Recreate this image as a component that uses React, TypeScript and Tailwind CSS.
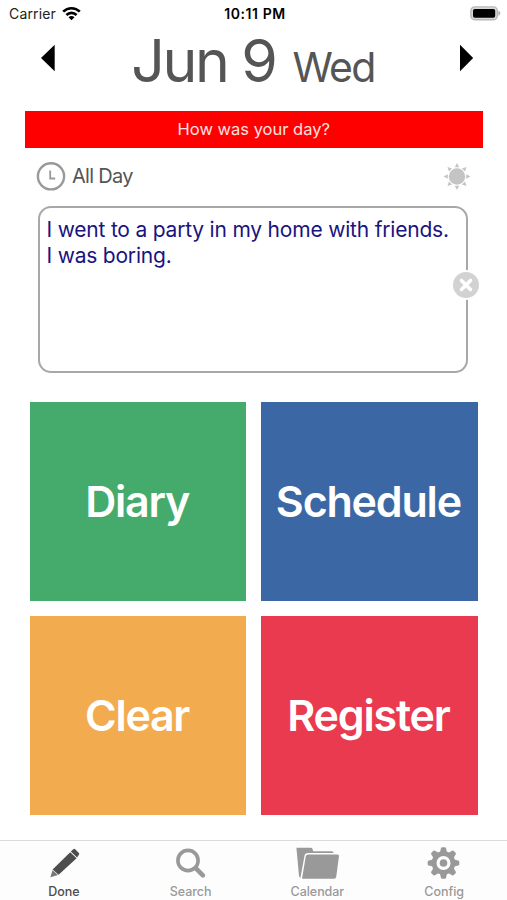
import React from 'react';

function WifiIcon() {
  return (
    <svg className="h-[15px] w-[19px]" viewBox="0 0 19 15" fill="none" stroke="#000" strokeWidth="2.6">
      <path d="M1.2 5.7C5.9 1 13.1 1 17.8 5.7" />
      <path d="M4.4 9C7.3 6.1 11.7 6.1 14.6 9" />
      <path d="M9.5 14.3 6.5 11.2C8.2 9.7 10.8 9.7 12.5 11.2Z" fill="#000" stroke="none" />
    </svg>
  );
}

function BatteryIcon() {
  return (
    <svg className="h-[15px] w-[31px]" viewBox="0 0 31 15">
      <rect x="0.9" y="0.9" width="26.4" height="12.8" rx="3.8" fill="#d8d8d8" stroke="#b8b8b8" strokeWidth="1.4" />
      <rect x="3" y="2.9" width="22.2" height="8.8" rx="1.8" fill="#000" />
      <path d="M28.3 4.8C31 5.6 31 9 28.3 9.8Z" fill="#b2b2b2" />
    </svg>
  );
}

function ClockIcon() {
  return (
    <svg className="h-[30px] w-[30px]" viewBox="0 0 30 30" fill="none" stroke="#999">
      <circle cx="15" cy="15.3" r="13.1" strokeWidth="2.4" />
      <path d="M14.2 9.5V17.5H19.2" strokeWidth="1.8" />
    </svg>
  );
}

const RAYS = [0, 45, 90, 135, 180, 225, 270, 315];

function SunIcon() {
  return (
    <svg className="h-[28px] w-[28px]" viewBox="-14 -14.5 28 28" fill="#c4c4c4">
      <circle r="8.2" />
      {RAYS.map((angle) => (
        <path key={angle} d="M-2.2-9.2H2.2L0-13.4Z" transform={`rotate(${angle})`} />
      ))}
    </svg>
  );
}

function PencilIcon() {
  return (
    <svg className="h-[34px] w-[46px]" viewBox="0 0 46 34">
      <path d="M9.4 31.2 11.5 24.2 17 29Z" fill="#777" />
      <path d="M11.6 23.4 29.2 6.2 35.6 12.2 17.6 28.8Z" fill="#4d4d4d" />
      <path d="M29.8 5.6 32.3 3.2Q33.3 2.4 34.2 3.3L37.9 7Q38.7 7.9 37.9 8.8L36 11.5Z" fill="#4d4d4d" />
    </svg>
  );
}

function SearchIcon() {
  return (
    <svg className="h-[34px] w-[46px]" viewBox="0 0 46 34" fill="none" stroke="#999">
      <circle cx="20" cy="14.5" r="10.1" strokeWidth="3.6" />
      <path d="M27.7 22.1 34.9 29.4" strokeWidth="4.6" strokeLinecap="round" />
    </svg>
  );
}

function FolderIcon() {
  return (
    <svg className="h-[34px] w-[46px]" viewBox="0 0 46 34" fill="#999">
      <path d="M2.4 1.8H16.8Q18.2 1.8 18.6 3.2L19.2 5.3H37.8Q39.6 5.3 39.6 7H14Q11.1 7 10.5 9.8L6.4 32Q5.2 31.4 5 29.8Z" />
      <path d="M14.3 8.4H43.5Q45.2 8.4 45 10.1L42.2 31Q41.9 32.8 40.1 32.8H8L11.7 10.8Q12.1 8.4 14.3 8.4Z" />
    </svg>
  );
}

function GearIcon() {
  return (
    <svg className="h-[34px] w-[46px]" viewBox="-22.5 -17 46 34" fill="#999">
      {RAYS.map((angle) => (
        <path key={angle} d="M-3.8-9.5 -2.6-14.6Q-2.3-15.8 -1.2-15.8H1.2Q2.3-15.8 2.6-14.6L3.8-9.5Z" transform={`rotate(${angle})`} />
      ))}
      <circle r="9.4" fill="none" stroke="#999" strokeWidth="4.8" />
      <circle r="3.8" />
    </svg>
  );
}

const TILES = [
  { label: 'Diary', style: 'bg-[#45ab6c] tracking-[-1.3px]' },
  { label: 'Schedule', style: 'bg-[#3b68a5] tracking-[-1.2px]' },
  { label: 'Clear', style: 'bg-[#f3ab50] tracking-[-1.3px]' },
  { label: 'Register', style: 'bg-[#e93a4f] tracking-[-1.2px]' },
];

const TABS = [
  { label: 'Done', icon: <PencilIcon />, style: 'text-[#4d4d4d]' },
  { label: 'Search', icon: <SearchIcon />, style: 'text-[#999]' },
  { label: 'Calendar', icon: <FolderIcon />, style: 'text-[#999]' },
  { label: 'Config', icon: <GearIcon />, style: 'text-[#999]' },
];

export default function App() {
  return (
    <div className="flex h-[900px] w-[507px] flex-col overflow-hidden whitespace-nowrap bg-white font-['Inter',sans-serif]">
      <div className="grid h-[27px] shrink-0 grid-cols-3 items-center pl-[9px] pr-[6px] text-[14px] text-[#222]">
        <div className="flex items-center gap-[6px]">
          <span className="tracking-[0.15px]">Carrier</span>
          <WifiIcon />
        </div>
        <span className="text-center font-semibold tracking-[0.6px] text-black">10:11 PM</span>
        <div className="flex justify-end">
          <BatteryIcon />
        </div>
      </div>

      <header className="flex h-[84px] shrink-0 items-start justify-between pl-[41px] pr-[33px]">
        <button className="mt-[17px]" aria-label="Previous day">
          <svg className="h-[28px] w-[14px]" viewBox="0 0 14 28"><path d="M0 14 13.7 0.8V27.2Z" /></svg>
        </button>
        <h1 className="mr-[9px] flex items-baseline gap-[17px] leading-[68px] text-[#555]">
          <span className="text-[59px] tracking-[-2.5px]">Jun 9</span>
          <span className="text-[41px] tracking-[-1.7px]">Wed</span>
        </h1>
        <button className="mt-[17px]" aria-label="Next day">
          <svg className="h-[28px] w-[14px]" viewBox="0 0 14 28"><path d="M13.2 14 0 0.8V27.2Z" /></svg>
        </button>
      </header>

      <div className="ml-[25px] flex h-[36.5px] w-[457.5px] shrink-0 items-center justify-center bg-[#ff0000] text-[16.5px] text-[#ffe0e0]">
        How was your day?
      </div>

      <div className="flex h-[58px] shrink-0 items-center pb-[2px] pl-[35.5px] pr-[36px]">
        <ClockIcon />
        <span className="ml-[6.5px] flex-1 text-[20px] tracking-[-0.7px] text-[#555]">All Day</span>
        <SunIcon />
      </div>

      <div className="relative ml-[37.5px] h-[167px] w-[430.5px] shrink-0 rounded-[13px] border-[2.5px] border-[#a8a8a8] pl-[7px] pt-[9px] text-[21px] leading-[26.5px] tracking-[-0.2px] text-[#1a1480]">
        <p>I went to a party in my home with friends.</p>
        <p>I was boring.</p>
        <button className="absolute right-[-15px] top-[62px]" aria-label="Clear text">
          <svg className="h-[30px] w-[30px]" viewBox="0 0 30 30">
            <circle cx="15" cy="15" r="15" fill="#fff" />
            <circle cx="15" cy="15" r="13" fill="#d2d2d2" />
            <path d="M10.5 10.5 19.5 19.5M19.5 10.5 10.5 19.5" stroke="#fff" strokeWidth="3.6" strokeLinecap="round" />
          </svg>
        </button>
      </div>

      <main className="ml-[30px] mt-[29px] grid w-[447.5px] shrink-0 grid-cols-2 gap-[15px]">
        {TILES.map((tile) => (
          <button key={tile.label} className={`flex h-[199px] items-center justify-center pr-[2px] text-[43px] font-semibold text-white ${tile.style}`}>
            {tile.label}
          </button>
        ))}
      </main>

      <nav className="mt-auto grid h-[60px] shrink-0 grid-cols-4 border-t border-[#dcdcdc] bg-[#fdfdfd]">
        {TABS.map((tab) => (
          <button key={tab.label} className={`flex flex-col items-center pl-px pt-[5px] ${tab.style}`}>
            {tab.icon}
            <span className="mt-[4px] text-[12.5px] font-medium leading-[16px] tracking-[-0.05px]">{tab.label}</span>
          </button>
        ))}
      </nav>
    </div>
  );
}
